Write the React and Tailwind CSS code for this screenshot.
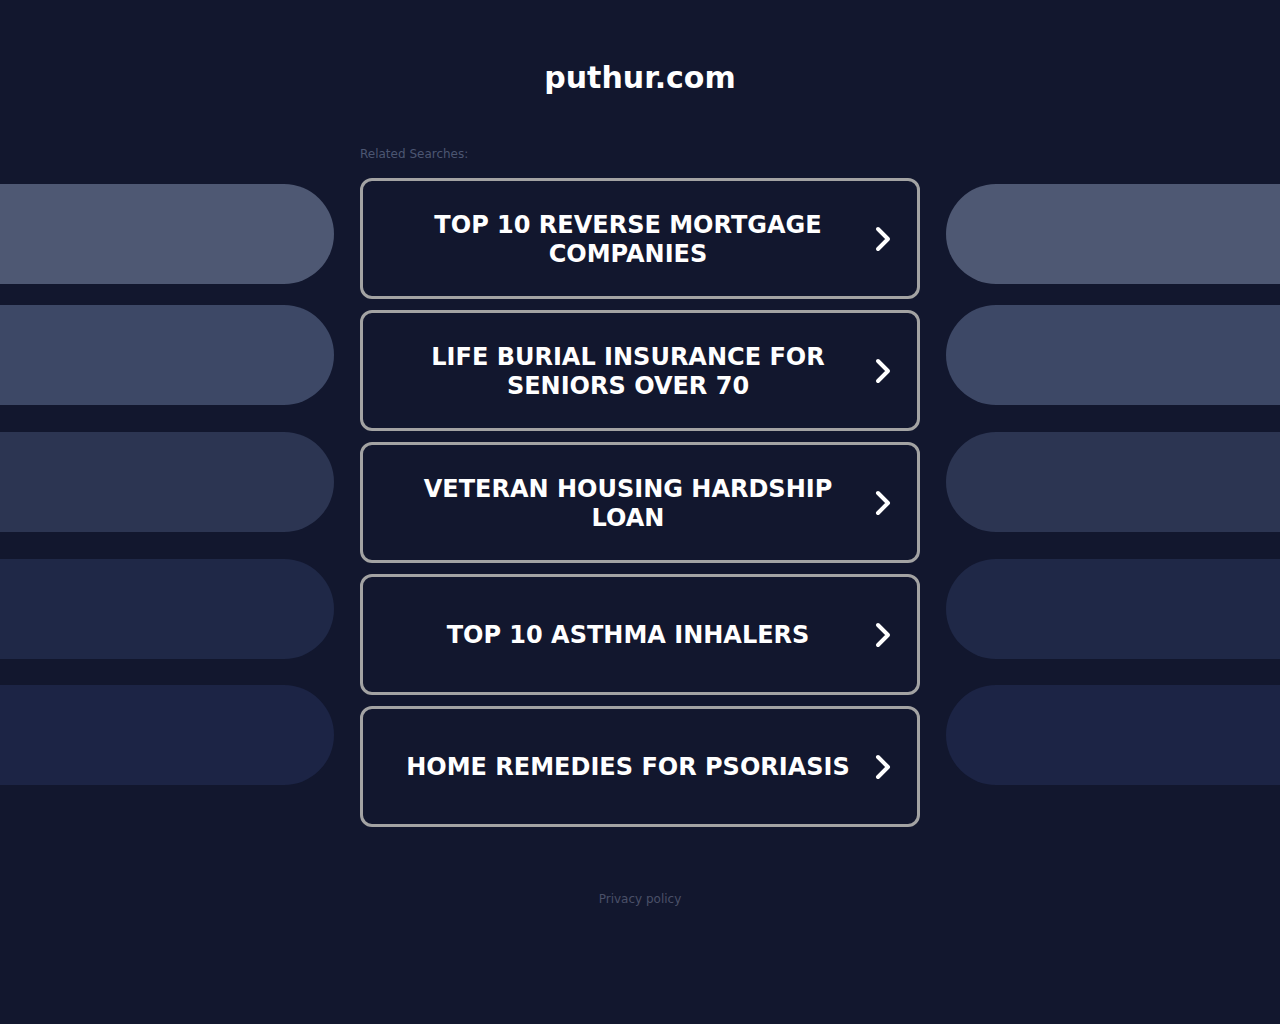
import React from "react";

const searches = [
  "TOP 10 REVERSE MORTGAGE COMPANIES",
  "LIFE BURIAL INSURANCE FOR SENIORS OVER 70",
  "VETERAN HOUSING HARDSHIP LOAN",
  "TOP 10 ASTHMA INHALERS",
  "HOME REMEDIES FOR PSORIASIS",
];

const pills = [
  { top: "mt-[184px]", color: "bg-[#4e5873]" },
  { top: "mt-[21px]", color: "bg-[#3d4866]" },
  { top: "mt-[27px]", color: "bg-[#2c3552]" },
  { top: "mt-[27px]", color: "bg-[#1f2847]" },
  { top: "mt-[26px]", color: "bg-[#1c2445]" },
];

const Chevron = () => (
  <svg width="20" height="30" viewBox="0 0 20 30" className="shrink-0">
    <path
      d="M5 5 L15 15 L5 25"
      fill="none"
      stroke="#ffffff"
      strokeWidth="4"
      strokeLinecap="round"
      strokeLinejoin="round"
    />
  </svg>
);

const SidePills = ({ side }) => (
  <div className="flex flex-col w-[334px]">
    {pills.map((p, i) => (
      <div
        key={i}
        className={`${p.top} ${p.color} h-[100px] ${
          side === "left" ? "rounded-r-[50px]" : "rounded-l-[50px]"
        }`}
      />
    ))}
  </div>
);

const SearchItem = ({ title }) => (
  <a
    href="#"
    className="flex items-center h-[121px] border-[3px] border-[#a3a3a3] rounded-[12px] pl-[20px] pr-[24px] bg-[#12172e]"
  >
    <span className="flex-1 text-center text-white text-[24px] leading-[29px] font-bold px-[10px] pt-[2px]">
      {title}
    </span>
    <Chevron />
  </a>
);

export default function App() {
  return (
    <div
      className="w-full min-h-[1024px] bg-[#12172e] flex justify-between"
      style={{ fontFamily: '"DejaVu Sans", sans-serif' }}
    >
      <SidePills side="left" />
      <div className="w-[560px] flex flex-col">
        <h1 className="mt-[59px] text-center text-white text-[30px] leading-[38px] font-bold">
          puthur.com
        </h1>
        <p className="mt-[49px] text-[12px] leading-[16px] text-[#4c5672]">
          Related Searches:
        </p>
        <div className="mt-[16px] flex flex-col gap-[11px]">
          {searches.map((s) => (
            <SearchItem key={s} title={s} />
          ))}
        </div>
        <p className="mt-[64px] text-center text-[12px] leading-[16px] text-[#4a5068]">
          Privacy policy
        </p>
      </div>
      <SidePills side="right" />
    </div>
  );
}
